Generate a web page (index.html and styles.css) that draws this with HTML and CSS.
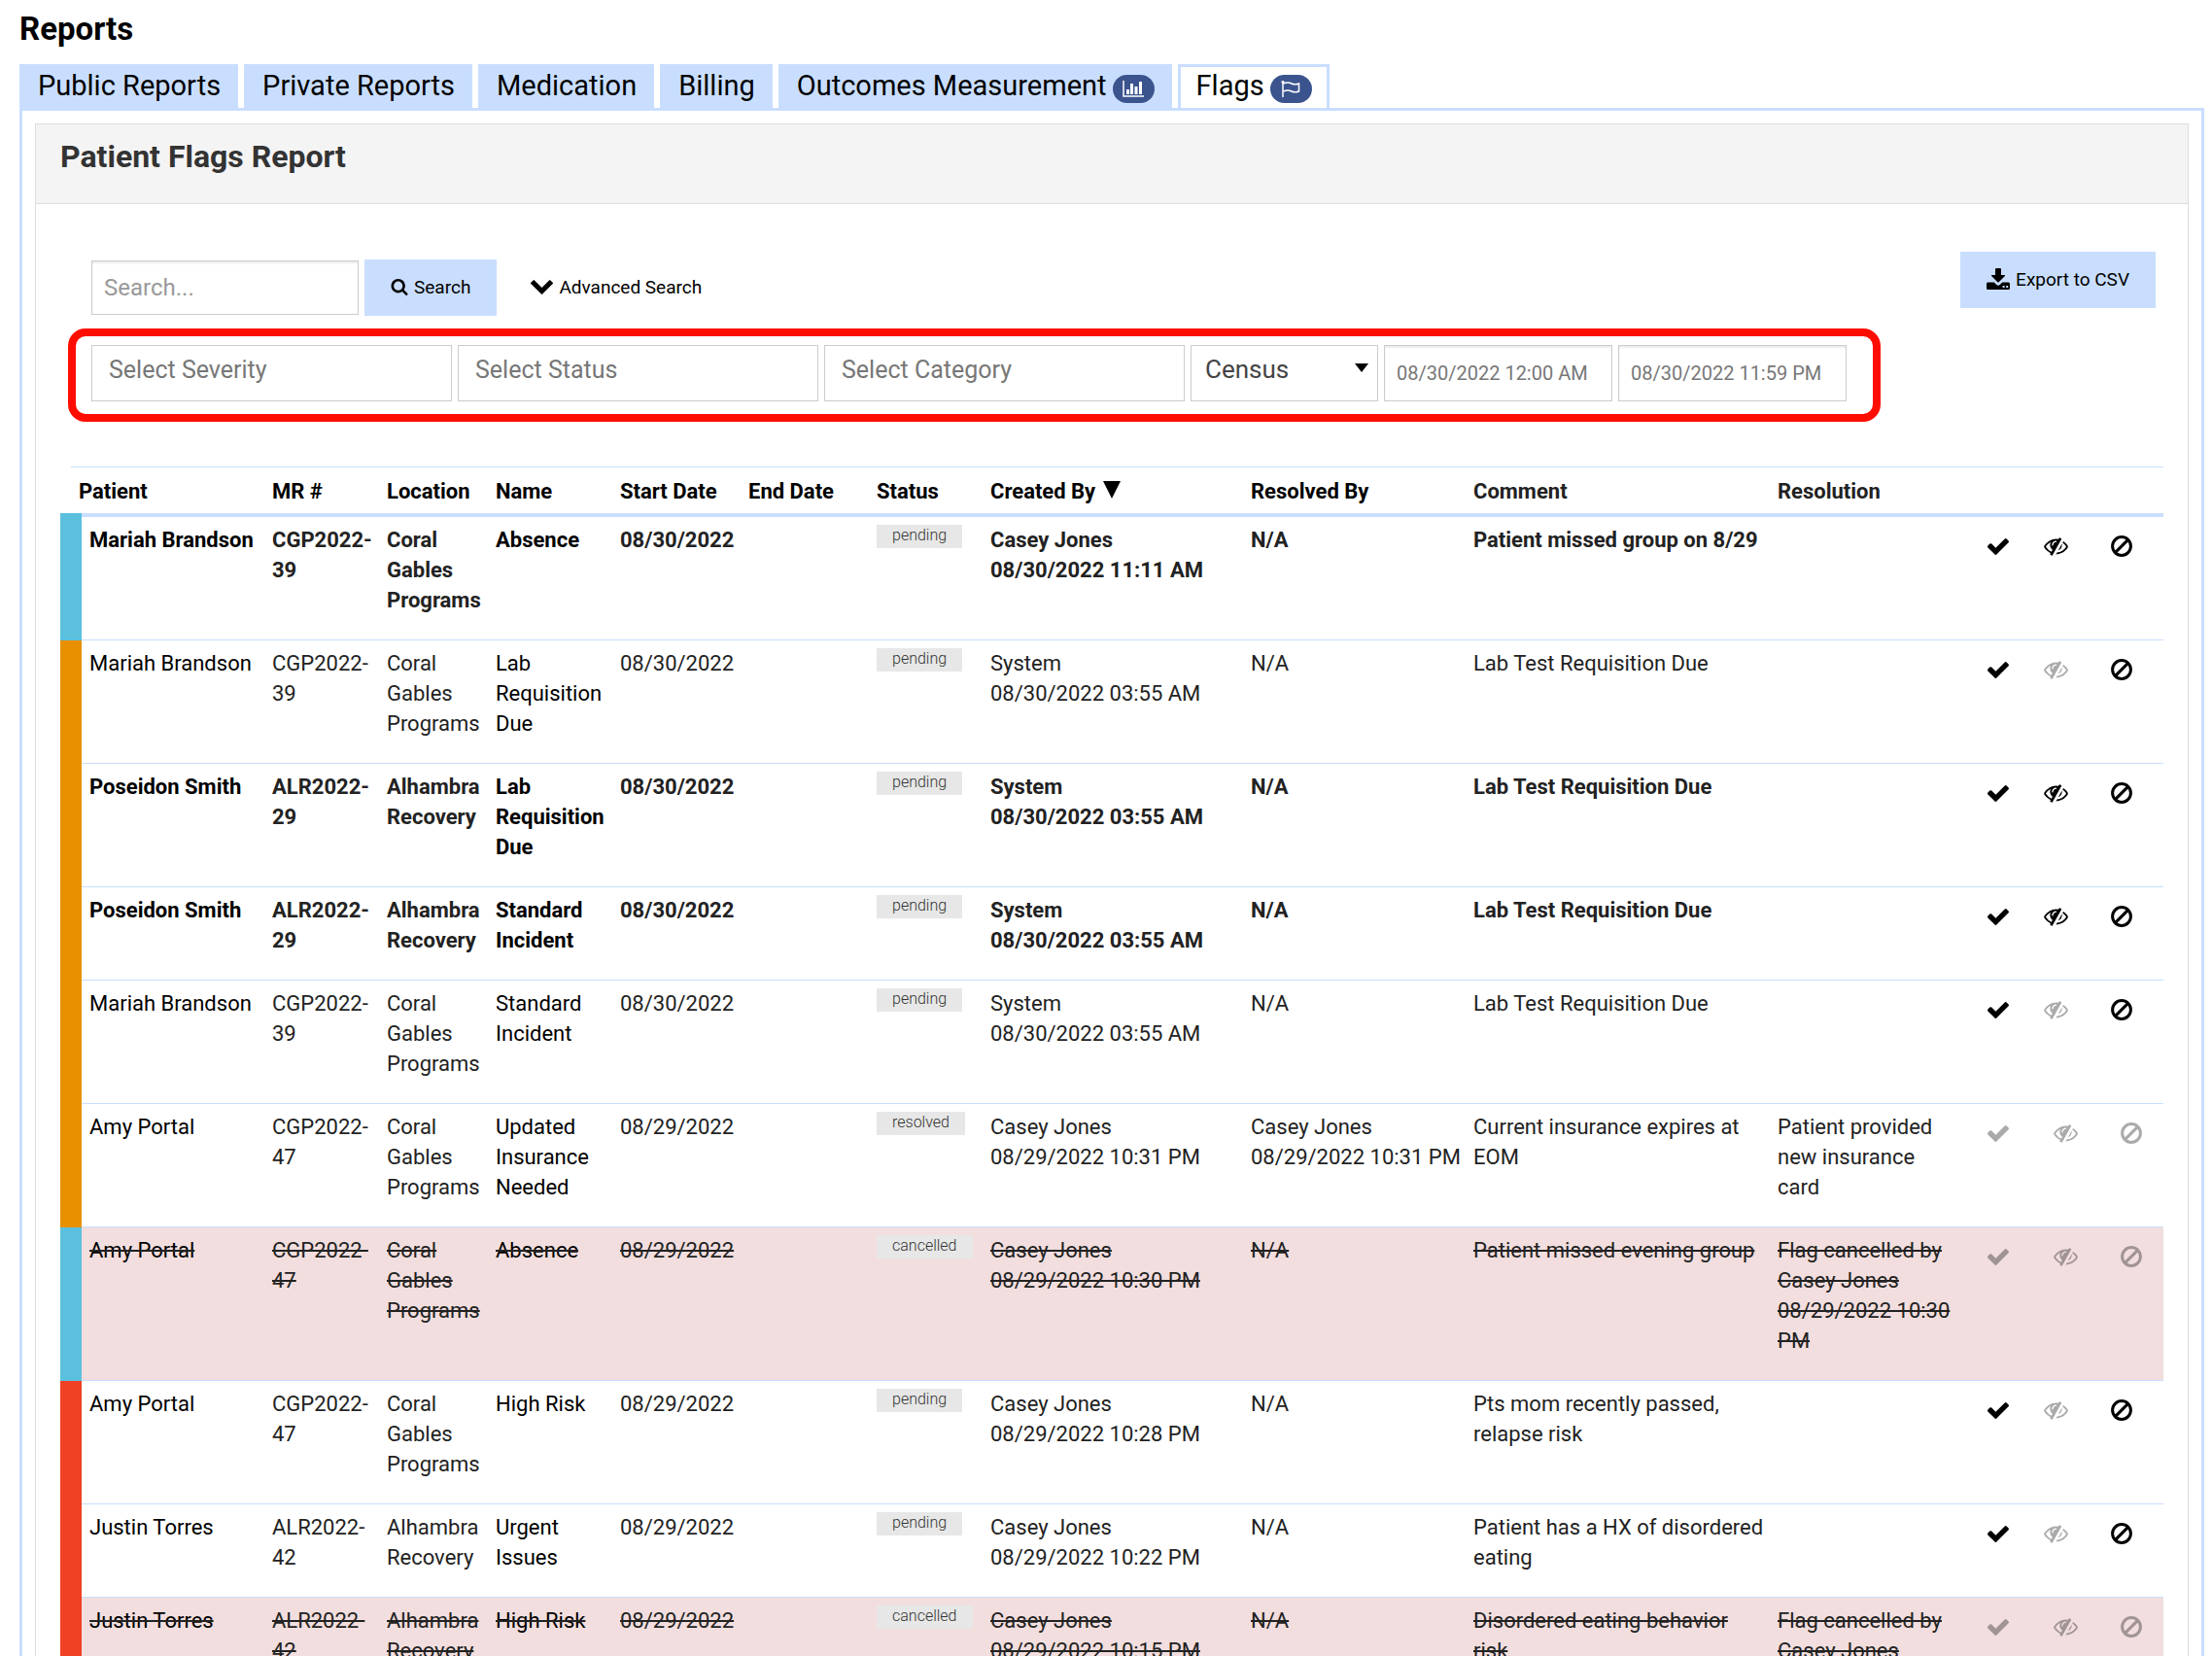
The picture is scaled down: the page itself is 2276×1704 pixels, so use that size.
FILE: index.html
```html
<!DOCTYPE html>
<html lang="en">
<head>
  <meta charset="UTF-8" />
  <meta name="viewport" content="width=device-width, initial-scale=1" />
  <title>Reports</title>
  <link rel="stylesheet" href="styles.css">
</head>
<body>

  <!-- shared icons -->
  <svg class="sprite" aria-hidden="true">
    <symbol id="i-check" viewBox="121 334 1550 1188"><path d="M1671 566q0 40-28 68l-724 724-136 136q-28 28-68 28t-68-28l-136-136-362-362q-28-28-28-68t28-68l136-136q28-28 68-28t68 28l294 295 656-657q28-28 68-28t68 28l136 136q28 28 28 68z"/></symbol>
    <symbol id="i-eye" viewBox="0 270 1792 1380"><path d="M555 1335l78-141q-87-63-136-159t-49-203q0-121 61-225-229 117-381 353 167 258 427 375zm389-759q0-20-14-34t-34-14q-125 0-214.5 89.5t-89.5 214.5q0 20 14 34t34 14 34-14 14-34q0-86 61-147t147-61q20 0 34-14t14-34zm363-191q0 7-1 9-106 189-316 567t-315 566l-49 89q-10 16-28 16-12 0-134-70-16-10-16-28 0-12 44-87-143-65-263.5-173t-208.5-245q-20-31-20-69t20-69q153-235 380-371t496-136q89 0 180 17l54-97q10-16 28-16 5 0 18 6t31 15.5 33 18.5 31.5 18.5 19.5 11.5q16 10 16 27zm37 447q0 139-79 253.5t-209 164.5l280-502q8 45 8 84zm448 128q0 35-20 69-39 64-109 145-150 172-347.5 267t-419.5 95l74-132q212-18 392.5-137t301.5-307q-115-179-282-294l63-112q95 64 182.5 153t144.5 184q20 34 20 69z"/></symbol>
    <symbol id="i-ban" viewBox="0 0 22 22"><circle cx="11" cy="11" r="9.4" fill="none" stroke="currentColor" stroke-width="3"/><path d="M4.6 17.4L17.4 4.6" fill="none" stroke="currentColor" stroke-width="3"/></symbol>
  </svg>

  <h1 class="page-title">Reports</h1>

  <nav class="tabs" aria-label="Report types">
    <a class="tab" href="#">Public Reports</a>
    <a class="tab" href="#">Private Reports</a>
    <a class="tab" href="#">Medication</a>
    <a class="tab" href="#">Billing</a>
    <a class="tab" href="#">Outcomes Measurement
      <span class="pill"><svg width="22" height="17" viewBox="0 0 22 17"><path d="M1 0v16h21" fill="none" stroke="currentColor" stroke-width="1.5"/><path d="M4 9h3v5H4zM8 3h3v11H8zM12.500 6h3v8h-3zM17 1h3v13h-3z"/></svg></span>
    </a>
    <a class="tab active" href="#" aria-current="page">Flags
      <span class="pill"><svg class="outline" width="20" height="17" viewBox="0 0 20 17"><path d="M2 1v16"/><path d="M2.500 3C6 1.500 8 1.500 11 3s5 1 7.500 0v8c-2.500 1-4.500 1.500-7.500 0s-5-1.500-8.500 0"/><circle cx="2" cy="1.500" r=".8"/></svg></span>
    </a>
  </nav>

  <main class="tab-content">
    <section class="panel">
      <header class="panel-header">
        <h2>Patient Flags Report</h2>
      </header>

      <div class="panel-body">
        <div class="toolbar">
          <form class="search" role="search">
            <input class="search-input" type="text" placeholder="Search..." aria-label="Search" />
            <button class="btn" type="button"><svg width="18" height="17" viewBox="64 128 1664 1664"><path d="M1216 832q0-185-131.5-316.5t-316.5-131.5-316.5 131.5-131.5 316.5 131.5 316.5 316.5 131.5 316.5-131.5 131.5-316.5zm512 832q0 52-38 90t-90 38q-54 0-90-38l-343-342q-179 124-399 124-143 0-273.5-55.5t-225-150-150-225-55.5-273.5 55.5-273.5 150-225 225-150 273.5-55.5 273.5 55.5 225 150 150 225 55.5 273.5q0 220-124 399l343 343q37 37 37 90z"/></svg>Search</button>
            <a class="advanced" href="#"><svg width="23" height="15" viewBox="90 533 1612 1035"><path d="M1683 808l-742 741q-19 19-45 19t-45-19l-742-741q-19-19-19-45.5t19-45.5l166-165q19-19 45-19t45 19l531 531 531-531q19-19 45-19t45 19l166 165q19 19 19 45.5t-19 45.5z"/></svg>Advanced Search</a>
          </form>
          <button class="btn" type="button"><svg width="24" height="22" viewBox="0 0 24 22"><path d="M9 1q0-1 1-1h4q1 0 1 1v6h3.500q1 0 .4.9l-6.200 6.300q-.7.7-1.400 0L5.100 7.900q-.6-.9.4-.9H9z"/><path fill-rule="evenodd" d="M1.500 14.500h6.200l2.600 2.400q1.700 1.500 3.400 0l2.600-2.400h6.200q1.500 0 1.500 1.500v4.500q0 1.500-1.500 1.500h-21Q0 22 0 20.500V16q0-1.500 1.500-1.500zM16.600 18v2h2v-2zm3.600 0v2h2v-2z"/></svg>Export to CSV</button>
        </div>

        <div class="filters">
          <input class="filter" type="text" placeholder="Select Severity" aria-label="Severity" />
          <input class="filter" type="text" placeholder="Select Status" aria-label="Status" />
          <input class="filter" type="text" placeholder="Select Category" aria-label="Category" />
          <div class="select-wrap">
            <select class="census" aria-label="Census">
              <option>Census</option>
            </select>
          </div>
          <input class="date" type="text" value="08/30/2022 12:00 AM" aria-label="From" />
          <input class="date" type="text" value="08/30/2022 11:59 PM" aria-label="To" />
        </div>

        <table class="flags">
          <colgroup>
            <col class="c-patient"><col class="c-mr"><col class="c-location"><col class="c-name"><col class="c-start"><col class="c-end"><col class="c-status"><col class="c-created"><col class="c-resolved"><col class="c-comment"><col class="c-resolution"><col class="c-actions">
          </colgroup>
          <thead>
            <tr>
              <th><a href="#">Patient</a></th>
              <th><a href="#">MR #</a></th>
              <th><a href="#">Location</a></th>
              <th><a href="#">Name</a></th>
              <th><a href="#">Start Date</a></th>
              <th><a href="#">End Date</a></th>
              <th><a href="#">Status</a></th>
              <th><a href="#">Created By <svg class="sort" width="18" height="18" viewBox="0 0 18 18"><path d="M0 0h18L9 18z"/></svg></a></th>
              <th><a href="#">Resolved By</a></th>
              <th>Comment</th>
              <th>Resolution</th>
              <th></th>
            </tr>
          </thead>
          <tbody>
            <tr class="low unread">
              <td><a href="#">Mariah Brandson</a></td>
              <td>CGP2022-39</td>
              <td>Coral Gables Programs</td>
              <td><a href="#">Absence</a></td>
              <td>08/30/2022</td>
              <td></td>
              <td><span class="label">pending</span></td>
              <td>Casey Jones<br>08/30/2022 11:11 AM</td>
              <td>N/A</td>
              <td>Patient missed group on 8/29</td>
              <td></td>
              <td><div class="actions"><button class="check" aria-label="Resolve"><svg><use href="#i-check"/></svg></button><button class="eye" aria-label="Mark as read"><svg><use href="#i-eye"/></svg></button><button class="ban" aria-label="Cancel"><svg><use href="#i-ban"/></svg></button></div></td>
            </tr>
            <tr class="medium">
              <td><a href="#">Mariah Brandson</a></td>
              <td>CGP2022-39</td>
              <td>Coral Gables Programs</td>
              <td><a href="#">Lab Requisition Due</a></td>
              <td>08/30/2022</td>
              <td></td>
              <td><span class="label">pending</span></td>
              <td>System<br>08/30/2022 03:55 AM</td>
              <td>N/A</td>
              <td>Lab Test Requisition Due</td>
              <td></td>
              <td><div class="actions"><button class="check" aria-label="Resolve"><svg><use href="#i-check"/></svg></button><button class="eye" aria-label="Mark as read" disabled><svg><use href="#i-eye"/></svg></button><button class="ban" aria-label="Cancel"><svg><use href="#i-ban"/></svg></button></div></td>
            </tr>
            <tr class="medium unread">
              <td><a href="#">Poseidon Smith</a></td>
              <td>ALR2022-29</td>
              <td>Alhambra Recovery</td>
              <td><a href="#">Lab Requisition Due</a></td>
              <td>08/30/2022</td>
              <td></td>
              <td><span class="label">pending</span></td>
              <td>System<br>08/30/2022 03:55 AM</td>
              <td>N/A</td>
              <td>Lab Test Requisition Due</td>
              <td></td>
              <td><div class="actions"><button class="check" aria-label="Resolve"><svg><use href="#i-check"/></svg></button><button class="eye" aria-label="Mark as read"><svg><use href="#i-eye"/></svg></button><button class="ban" aria-label="Cancel"><svg><use href="#i-ban"/></svg></button></div></td>
            </tr>
            <tr class="medium unread">
              <td><a href="#">Poseidon Smith</a></td>
              <td>ALR2022-29</td>
              <td>Alhambra Recovery</td>
              <td><a href="#">Standard Incident</a></td>
              <td>08/30/2022</td>
              <td></td>
              <td><span class="label">pending</span></td>
              <td>System<br>08/30/2022 03:55 AM</td>
              <td>N/A</td>
              <td>Lab Test Requisition Due</td>
              <td></td>
              <td><div class="actions"><button class="check" aria-label="Resolve"><svg><use href="#i-check"/></svg></button><button class="eye" aria-label="Mark as read"><svg><use href="#i-eye"/></svg></button><button class="ban" aria-label="Cancel"><svg><use href="#i-ban"/></svg></button></div></td>
            </tr>
            <tr class="medium">
              <td><a href="#">Mariah Brandson</a></td>
              <td>CGP2022-39</td>
              <td>Coral Gables Programs</td>
              <td><a href="#">Standard Incident</a></td>
              <td>08/30/2022</td>
              <td></td>
              <td><span class="label">pending</span></td>
              <td>System<br>08/30/2022 03:55 AM</td>
              <td>N/A</td>
              <td>Lab Test Requisition Due</td>
              <td></td>
              <td><div class="actions"><button class="check" aria-label="Resolve"><svg><use href="#i-check"/></svg></button><button class="eye" aria-label="Mark as read" disabled><svg><use href="#i-eye"/></svg></button><button class="ban" aria-label="Cancel"><svg><use href="#i-ban"/></svg></button></div></td>
            </tr>
            <tr class="medium">
              <td><a href="#">Amy Portal</a></td>
              <td>CGP2022-47</td>
              <td>Coral Gables Programs</td>
              <td><a href="#">Updated Insurance Needed</a></td>
              <td>08/29/2022</td>
              <td></td>
              <td><span class="label">resolved</span></td>
              <td>Casey Jones<br>08/29/2022 10:31 PM</td>
              <td>Casey Jones<br>08/29/2022 10:31 PM</td>
              <td>Current insurance expires at EOM</td>
              <td>Patient provided new insurance card</td>
              <td><div class="actions"><button class="check" aria-label="Resolve" disabled><svg><use href="#i-check"/></svg></button><button class="eye" aria-label="Mark as read" disabled><svg><use href="#i-eye"/></svg></button><button class="ban" aria-label="Cancel" disabled><svg><use href="#i-ban"/></svg></button></div></td>
            </tr>
            <tr class="low cancelled">
              <td><a href="#">Amy Portal</a></td>
              <td>CGP2022-47</td>
              <td>Coral Gables Programs</td>
              <td><a href="#">Absence</a></td>
              <td>08/29/2022</td>
              <td></td>
              <td><span class="label">cancelled</span></td>
              <td>Casey Jones<br>08/29/2022 10:30 PM</td>
              <td>N/A</td>
              <td>Patient missed evening group</td>
              <td>Flag cancelled by Casey Jones 08/29/2022 10:30 PM</td>
              <td><div class="actions"><button class="check" aria-label="Resolve" disabled><svg><use href="#i-check"/></svg></button><button class="eye" aria-label="Mark as read" disabled><svg><use href="#i-eye"/></svg></button><button class="ban" aria-label="Cancel" disabled><svg><use href="#i-ban"/></svg></button></div></td>
            </tr>
            <tr class="high">
              <td><a href="#">Amy Portal</a></td>
              <td>CGP2022-47</td>
              <td>Coral Gables Programs</td>
              <td><a href="#">High Risk</a></td>
              <td>08/29/2022</td>
              <td></td>
              <td><span class="label">pending</span></td>
              <td>Casey Jones<br>08/29/2022 10:28 PM</td>
              <td>N/A</td>
              <td>Pts mom recently passed, relapse risk</td>
              <td></td>
              <td><div class="actions"><button class="check" aria-label="Resolve"><svg><use href="#i-check"/></svg></button><button class="eye" aria-label="Mark as read" disabled><svg><use href="#i-eye"/></svg></button><button class="ban" aria-label="Cancel"><svg><use href="#i-ban"/></svg></button></div></td>
            </tr>
            <tr class="high">
              <td><a href="#">Justin Torres</a></td>
              <td>ALR2022-42</td>
              <td>Alhambra Recovery</td>
              <td><a href="#">Urgent Issues</a></td>
              <td>08/29/2022</td>
              <td></td>
              <td><span class="label">pending</span></td>
              <td>Casey Jones<br>08/29/2022 10:22 PM</td>
              <td>N/A</td>
              <td>Patient has a HX of disordered eating</td>
              <td></td>
              <td><div class="actions"><button class="check" aria-label="Resolve"><svg><use href="#i-check"/></svg></button><button class="eye" aria-label="Mark as read" disabled><svg><use href="#i-eye"/></svg></button><button class="ban" aria-label="Cancel"><svg><use href="#i-ban"/></svg></button></div></td>
            </tr>
            <tr class="high cancelled">
              <td><a href="#">Justin Torres</a></td>
              <td>ALR2022-42</td>
              <td>Alhambra Recovery</td>
              <td><a href="#">High Risk</a></td>
              <td>08/29/2022</td>
              <td></td>
              <td><span class="label">cancelled</span></td>
              <td>Casey Jones<br>08/29/2022 10:15 PM</td>
              <td>N/A</td>
              <td>Disordered eating behavior risk</td>
              <td>Flag cancelled by Casey Jones</td>
              <td><div class="actions"><button class="check" aria-label="Resolve" disabled><svg><use href="#i-check"/></svg></button><button class="eye" aria-label="Mark as read" disabled><svg><use href="#i-eye"/></svg></button><button class="ban" aria-label="Cancel" disabled><svg><use href="#i-ban"/></svg></button></div></td>
            </tr>
          </tbody>
        </table>
      </div>
    </section>
  </main>

</body>
</html>
```
FILE: styles.css
```css
:root {
  --blue: #c9deff;
  --pill: #3b548e;
  --border: #ccc;
  --text: #222;
}

* {
  box-sizing: border-box;
}

body {
  margin: 0;
  padding: 10px 8px 0 20px;
  height: 100vh;
  overflow: hidden;
  font-family: Roboto, sans-serif;
  font-size: 22px;
  line-height: 31px;
  color: var(--text);
  background: #fff;
}

a {
  color: #000;
  text-decoration: none;
}

svg {
  fill: currentColor;
}

svg.outline {
  fill: none;
  stroke: currentColor;
  stroke-width: 1.5;
}

input,
select,
button {
  font-family: inherit;
  margin: 0;
}

.sprite {
  display: none;
}

.page-title {
  margin: 0 0 16px;
  font-size: 33px;
  line-height: 40px;
  color: #000;
}

/* tabs */
.tabs {
  display: flex;
  gap: 6px;
}

.tab {
  display: flex;
  gap: 6px;
  height: 45px;
  padding: 6px 18px 0 19px;
  background: var(--blue);
  font-size: 29px;
  line-height: 32px;
}

.tab.active {
  background: #fff;
  border: 3px solid var(--blue);
  border-bottom: 0;
  padding: 3px 15px 0 16px;
}

.pill {
  display: flex;
  align-items: center;
  justify-content: center;
  width: 43px;
  height: 29px;
  margin-top: 5px;
  border-radius: 15px;
  background: var(--pill);
  color: #fff;
}

.tab-content {
  border: 3px solid var(--blue);
  border-bottom: 0;
  padding: 13px;
}

.panel {
  border: 1px solid #ddd;
}

.panel-header {
  padding: 13px 25px 28px;
  background: #f4f4f4;
  border-bottom: 1px solid #ddd;
}

.panel-header h2 {
  margin: 0;
  font-size: 32px;
  line-height: 40px;
  color: #333;
}

.panel-body {
  padding: 49px 25px 0;
}

/* search bar */
.toolbar {
  display: flex;
  justify-content: space-between;
  align-items: flex-start;
  padding: 0 8px 0 32px;
}

.search {
  display: flex;
  align-items: center;
  gap: 6px;
  margin-top: 8px;
}

.search-input {
  width: 275px;
  height: 56px;
  padding: 0 12px;
  border: 1px solid var(--border);
  box-shadow: inset 0 2px 2px rgba(0, 0, 0, 0.08);
  font-size: 24px;
}

.search-input::placeholder {
  color: #999;
}

.btn {
  display: flex;
  align-items: center;
  gap: 6px;
  height: 58px;
  padding: 0 27px 2px;
  border: none;
  background: var(--blue);
  color: #000;
  font-size: 19px;
  cursor: pointer;
}

.advanced {
  display: flex;
  align-items: center;
  gap: 6px;
  margin-left: 29px;
  padding-bottom: 2px;
  font-size: 19px;
}

/* filters */
.filters {
  display: flex;
  gap: 6px;
  width: fit-content;
  margin: 13px 0 46px 8px;
  padding: 9px 27px 13px 16px;
  border: 8px solid #ff0d00;
  border-radius: 18px;
}

.filter,
.census,
.date {
  height: 58px;
  border: 1px solid var(--border);
  border-radius: 0;
  background: #fff;
}

.filter {
  width: 371px;
  padding: 0 17px 8px;
  font-size: 25px;
}

.filter::placeholder {
  color: #777;
}

.select-wrap {
  position: relative;
  width: 193px;
}

.select-wrap::after {
  content: "";
  position: absolute;
  top: 19px;
  right: 10px;
  border: 7px solid transparent;
  border-top: 9px solid #000;
  border-bottom: 0;
  pointer-events: none;
}

.census {
  width: 100%;
  padding: 0 14px 8px;
  font-size: 26px;
  color: #444;
  appearance: none;
}

.date {
  width: 235px;
  padding: 0 12px;
  box-shadow: inset 0 2px 2px rgba(0, 0, 0, 0.08);
  font-size: 20px;
  color: #777;
}

/* flags table */
.flags {
  width: 100%;
  table-layout: fixed;
  border-collapse: collapse;
}

.c-patient { width: 199px; }
.c-mr { width: 118px; }
.c-location { width: 112px; }
.c-name { width: 128px; }
.c-start { width: 132px; }
.c-end { width: 132px; }
.c-status { width: 117px; }
.c-created { width: 268px; }
.c-resolved { width: 229px; }
.c-resolution { width: 198px; }
.c-actions { width: 207px; }

.flags th {
  padding: 9px 0 7px 8px;
  border-top: 1px solid var(--blue);
  border-bottom: 4px solid var(--blue);
  text-align: left;
  white-space: nowrap;
}

.sort {
  margin-left: 2px;
}

.flags td {
  padding: 8px 4px 25px 8px;
  border-bottom: 1px solid var(--blue);
  vertical-align: top;
}

.flags td:first-child {
  border-left: 22px solid;
}

.low td:first-child { border-left-color: #5bc0de; }
.medium td:first-child { border-left-color: #e89000; }
.high td:first-child { border-left-color: #f04124; }

.unread td {
  font-weight: 700;
}

.cancelled td {
  background: #f2dede;
  text-decoration: line-through;
}

.label {
  display: inline-block;
  height: 24px;
  padding: 0 16px;
  background: #e7e7e7;
  color: #333;
  font-size: 16px;
  font-weight: 300;
  line-height: 22px;
  vertical-align: top;
}

.actions {
  display: flex;
  align-items: center;
  padding: 11px 0 0 18px;
}

.actions button {
  display: flex;
  padding: 0;
  border: none;
  background: none;
  color: #000;
  cursor: pointer;
}

.actions button:disabled {
  opacity: 0.33;
  cursor: default;
}

.check { margin-right: 36px; }
.check:disabled { margin-right: 46px; }
.eye { margin-right: 44px; }

.check svg { width: 22px; height: 17px; }
.eye svg { width: 25px; height: 19px; }
.ban svg { width: 22px; height: 22px; }
```
